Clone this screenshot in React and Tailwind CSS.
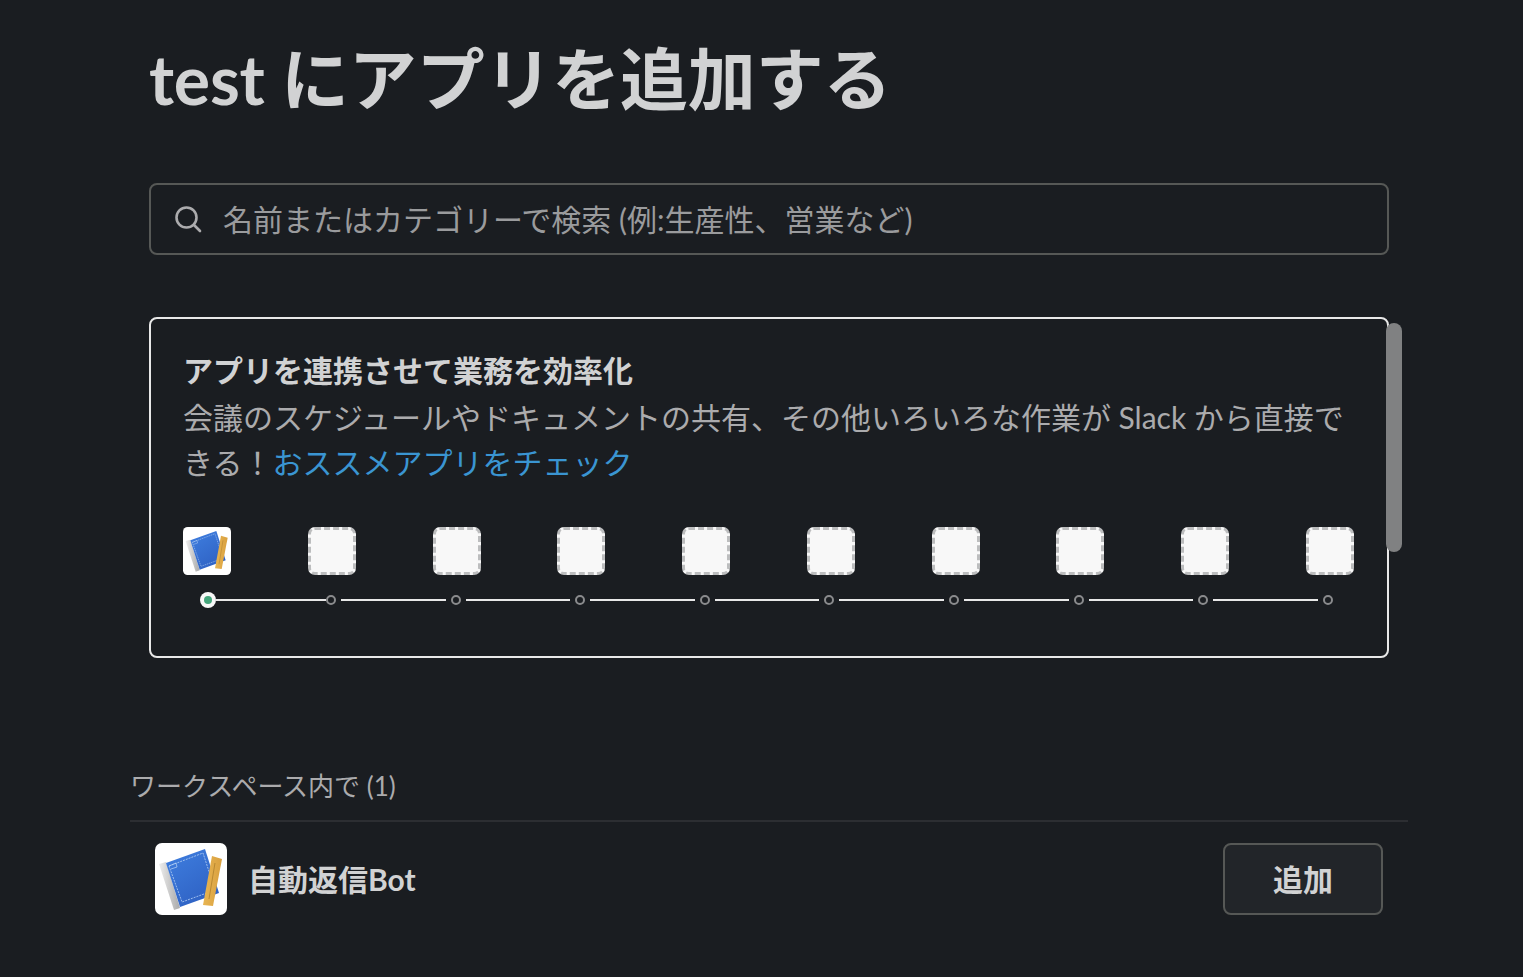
const FONT = "font-['Lato','Noto_Sans_CJK_JP',sans-serif]";

function AppIcon({ className }) {
  return (
    <svg viewBox="0 0 72 72" className={className}>
      <defs>
        <linearGradient id="blue" x1="0" y1="0" x2="0.6" y2="1">
          <stop offset="0" stopColor="#3f7fe0" />
          <stop offset="1" stopColor="#2f62c4" />
        </linearGradient>
        <linearGradient id="wood" x1="0" y1="0" x2="1" y2="0">
          <stop offset="0" stopColor="#e8b552" />
          <stop offset="1" stopColor="#d9a03f" />
        </linearGradient>
        <linearGradient id="page" x1="0" y1="0" x2="1" y2="0">
          <stop offset="0" stopColor="#eeeeee" />
          <stop offset="1" stopColor="#a9a9a9" />
        </linearGradient>
      </defs>
      <rect width="72" height="72" rx="7" fill="#ffffff" />
      <path d="M4 21 L11 19 L25 65 L19 67 Z" fill="url(#page)" />
      <path d="M11 20 L50 6 L64 50 L25 64 Z" fill="url(#blue)" />
      <path d="M14 23 L48 10 L60 47 L27 59 Z" fill="none" stroke="#b8d2f5" strokeWidth="0.8" strokeDasharray="2 1" />
      <path d="M14 23 L21 20 L22 24 L16 26" fill="none" stroke="#b8d2f5" strokeWidth="0.7" />
      <path d="M57 13 L67 16 L58 63 L48 62 Z" fill="url(#wood)" />
      <path d="M60 20 L54 56" stroke="#a87a28" strokeWidth="0.7" />
    </svg>
  );
}

function Placeholder() {
  return (
    <div className="w-12 h-12 shrink-0 rounded-[7px] bg-[#f8f8f8] border-[3px] border-dashed border-[#bcbdbe]" />
  );
}

function Dot() {
  return <span className="w-[10px] h-[10px] shrink-0 rounded-full border-2 border-[#8a8b8d]" />;
}

function Stepper() {
  const rest = [0, 1, 2, 3, 4, 5, 6, 7];
  return (
    <div className="flex items-center ml-[17px] mt-[17px] h-4">
      <span className="w-4 h-4 shrink-0 rounded-full bg-[#f8f8f8] flex items-center justify-center">
        <span className="w-2 h-2 rounded-full bg-[#45a67c]" />
      </span>
      <span className="w-[110px] h-[2px] bg-[#e8e8e8]" />
      <Dot />
      {rest.map((i) => (
        <span key={i} className="flex items-center">
          <span className="w-[104.6px] h-[2px] mx-[5px] bg-[#e8e8e8]" />
          <Dot />
        </span>
      ))}
    </div>
  );
}

export default function App() {
  return (
    <div className={`${FONT} min-h-[977px] bg-[#1a1d21] pl-[130px] pr-[115px] overflow-hidden`}>
      <div className="pl-[19px] pr-[19px]">
        <h1 className="h-[183px] pt-[31px] text-[68px] leading-[96px] font-bold text-[#d1d2d3] tracking-[-0.2px]">
          test にアプリを追加する
        </h1>
        <div className="h-[72px] rounded-lg border-2 border-[#565856] flex items-center pl-[22px]">
          <svg viewBox="0 0 30 30" className="w-[30px] h-[30px] text-[#ababad]" fill="none" stroke="currentColor" strokeWidth="2.6" strokeLinecap="round">
            <circle cx="13.5" cy="13.5" r="10" />
            <path d="M21 21 L27 27" />
          </svg>
          <span className="ml-[20px] text-[30px] leading-[40px] text-[#9a9b9d]">
            名前またはカテゴリーで検索 (例:生産性、営業など)
          </span>
        </div>

        <div className="relative mt-[62px] h-[341px] rounded-lg border-2 border-[#e8e8e8] pl-[32px] pr-[33px] pt-[31px]">
          <div className="text-[30px] leading-[40px] font-bold text-[#d1d2d3]">アプリを連携させて業務を効率化</div>
          <p className="mt-[5px] text-[30px] leading-[45px] text-[#ababad] h-[90px] whitespace-nowrap">
            会議のスケジュールやドキュメントの共有、その他いろいろな作業が Slack から直接で
            <br />
            きる！<span className="text-[#3a95d2]">おススメアプリをチェック</span>
          </p>
          <div className="mt-[42px] flex justify-between">
            <AppIcon className="w-12 h-12 shrink-0" />
            <Placeholder />
            <Placeholder />
            <Placeholder />
            <Placeholder />
            <Placeholder />
            <Placeholder />
            <Placeholder />
            <Placeholder />
            <Placeholder />
          </div>
          <Stepper />
          <div className="absolute left-[1235px] top-[4px] w-[16px] h-[229px] rounded-lg bg-[#808182]" />
        </div>
      </div>

      <div className="mt-[110px] h-[54px] border-b-2 border-[#2c2e32] text-[26px] leading-[36px] text-[#ababad]">
        ワークスペース内で (1)
      </div>
      <div className="mt-[21px] px-[25px] flex items-center justify-between">
        <div className="flex items-center">
          <AppIcon className="w-[72px] h-[72px]" />
          <span className="ml-[21px] text-[30px] leading-[40px] font-bold text-[#d1d2d3]">自動返信Bot</span>
        </div>
        <button className="w-[160px] h-[72px] rounded-lg border-2 border-[#565856] bg-[#222529] text-[30px] font-bold text-[#d1d2d3]">
          追加
        </button>
      </div>
    </div>
  );
}
